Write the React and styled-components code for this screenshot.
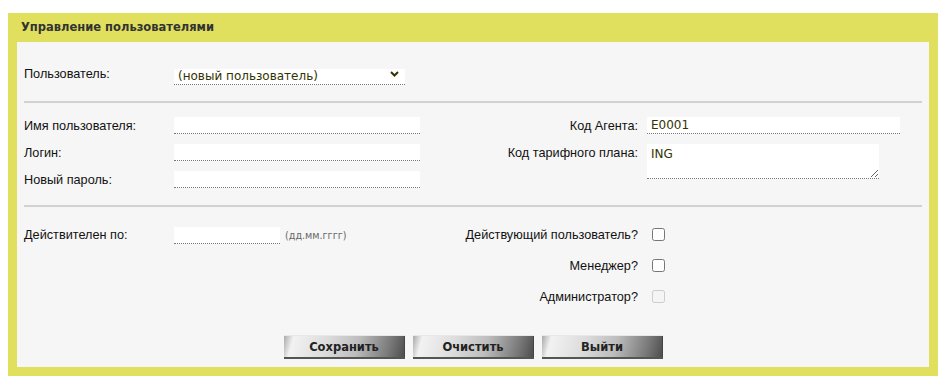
import React from "react";
import styled, { createGlobalStyle } from "styled-components";

const Global = createGlobalStyle`
  body {
    margin: 0;
    background: #ffffff;
    font-family: "Liberation Sans", Arial, sans-serif;
  }
`;

const Panel = styled.div`
  margin: 13px 0 0 8px;
  width: 930px;
  background: #e0df5e;
  padding: 0 9px 9px;
  box-sizing: border-box;
`;

const Header = styled.div`
  height: 29px;
  line-height: 28px;
  padding-left: 4px;
  font-family: "DejaVu Sans", Verdana, sans-serif;
  font-weight: bold;
  font-size: 11.5px;
  color: #333333;
`;

const Body = styled.div`
  background: #f6f6f6;
  padding: 24px 7px 8px;
  display: flex;
  flex-direction: column;
`;

const Label = styled.label`
  font-size: 12.7px;
  color: #111;
  display: flex;
  align-items: center;
  justify-content: ${(p) => (p.$right ? "flex-end" : "flex-start")};
  padding-right: ${(p) => (p.$right ? "9px" : "0")};
  white-space: nowrap;
`;

const SelectRow = styled.div`
  display: grid;
  grid-template-columns: 150px 231px;
  height: 16px;
`;

const SelectWrap = styled.div`
  position: relative;
  height: 16px;
`;

const Select = styled.select`
  appearance: none;
  width: 100%;
  height: 16px;
  box-sizing: border-box;
  border: none;
  border-bottom: 1px dotted #777;
  background: #ffffff;
  font-family: "DejaVu Sans", Verdana, sans-serif;
  font-size: 12px;
  color: #333300;
  padding: 0 0 0 4px;
  margin: 0;
  outline: none;
`;

const Chevron = styled.svg`
  position: absolute;
  right: 6px;
  top: 5px;
  pointer-events: none;
`;

const Divider = styled.div`
  height: 2px;
  background: #d2d2d2;
  margin-top: ${(p) => p.$top}px;
`;

const Grid = styled.div`
  display: grid;
  grid-template-columns: 150px 246px 1fr 275px;
  grid-auto-rows: ${(p) => p.$row}px;
  row-gap: ${(p) => p.$gap}px;
  margin-top: ${(p) => p.$top}px;
`;

const Input = styled.input`
  box-sizing: border-box;
  width: ${(p) => p.$w}px;
  height: 17px;
  border: none;
  border-bottom: 1px dotted #777;
  background: #ffffff;
  font-family: "DejaVu Sans", Verdana, sans-serif;
  font-size: 12px;
  color: #333300;
  padding: 0 4px;
  margin: 0;
  outline: none;
`;

const TextArea = styled.textarea`
  box-sizing: border-box;
  width: 232px;
  height: 35px;
  border: none;
  border-bottom: 1px dotted #777;
  background: #ffffff;
  font-family: "DejaVu Sans", Verdana, sans-serif;
  font-size: 12px;
  line-height: 14px;
  color: #333300;
  padding: 3px 4px;
  margin: 0;
  outline: none;
  grid-row: span 2;
  align-self: start;
`;

const Cell = styled.div`
  display: flex;
  align-items: ${(p) => (p.$top ? "flex-start" : "center")};
  gap: 5px;
`;

const Hint = styled.span`
  font-family: "DejaVu Sans", Verdana, sans-serif;
  font-size: 9.6px;
  color: #666;
  white-space: nowrap;
`;

const Check = styled.input.attrs({ type: "checkbox" })`
  width: 13px;
  height: 13px;
  margin: 1px 0 0 5px;
`;

const Buttons = styled.div`
  display: flex;
  justify-content: center;
  gap: 8px;
  margin-top: 30px;
`;

const Button = styled.button`
  width: 121px;
  height: 24px;
  border: none;
  padding: 0;
  font-family: "DejaVu Sans", Verdana, sans-serif;
  font-weight: bold;
  font-size: 11.5px;
  color: #222;
  background: linear-gradient(
    105deg,
    #a8a8a8 0%,
    #f2f2f2 8%,
    #dcdcdc 35%,
    #bdbdbd 60%,
    #7a7a7a 85%,
    #4a4a4a 100%
  );
  box-shadow: inset 0 1px 0 #e8e8e8, inset 0 -2px 0 #555, inset -1px 0 0 #444;
  cursor: pointer;
`;

export default function App() {
  return (
    <>
      <Global />
      <Panel>
        <Header>Управление пользователями</Header>
        <Body>
          <SelectRow>
            <Label>Пользователь:</Label>
            <SelectWrap>
              <Select defaultValue="new">
                <option value="new">(новый пользователь)</option>
              </Select>
              <Chevron width="9" height="6" viewBox="0 0 9 6">
                <path d="M1 1 L4.5 4.5 L8 1" fill="none" stroke="#333300" strokeWidth="2" />
              </Chevron>
            </SelectWrap>
          </SelectRow>

          <Divider $top={19} />

          <Grid $row={17} $gap={10} $top={14}>
            <Label>Имя пользователя:</Label>
            <Cell><Input $w={246} /></Cell>
            <Label $right>Код Агента:</Label>
            <Cell><Input $w={253} defaultValue="E0001" /></Cell>

            <Label>Логин:</Label>
            <Cell><Input $w={246} /></Cell>
            <Label $right>Код тарифного плана:</Label>
            <TextArea defaultValue="ING" />

            <Label>Новый пароль:</Label>
            <Cell><Input $w={246} type="password" /></Cell>
          </Grid>

          <Divider $top={17} />

          <Grid $row={16} $gap={15} $top={20}>
            <Label>Действителен по:</Label>
            <Cell>
              <Input $w={106} />
              <Hint>(дд.мм.гггг)</Hint>
            </Cell>
            <Label $right>Действующий пользователь?</Label>
            <Cell $top><Check /></Cell>

            <span />
            <span />
            <Label $right>Менеджер?</Label>
            <Cell $top><Check /></Cell>

            <span />
            <span />
            <Label $right>Администратор?</Label>
            <Cell $top><Check disabled /></Cell>
          </Grid>

          <Buttons>
            <Button>Сохранить</Button>
            <Button>Очистить</Button>
            <Button>Выйти</Button>
          </Buttons>
        </Body>
      </Panel>
    </>
  );
}
